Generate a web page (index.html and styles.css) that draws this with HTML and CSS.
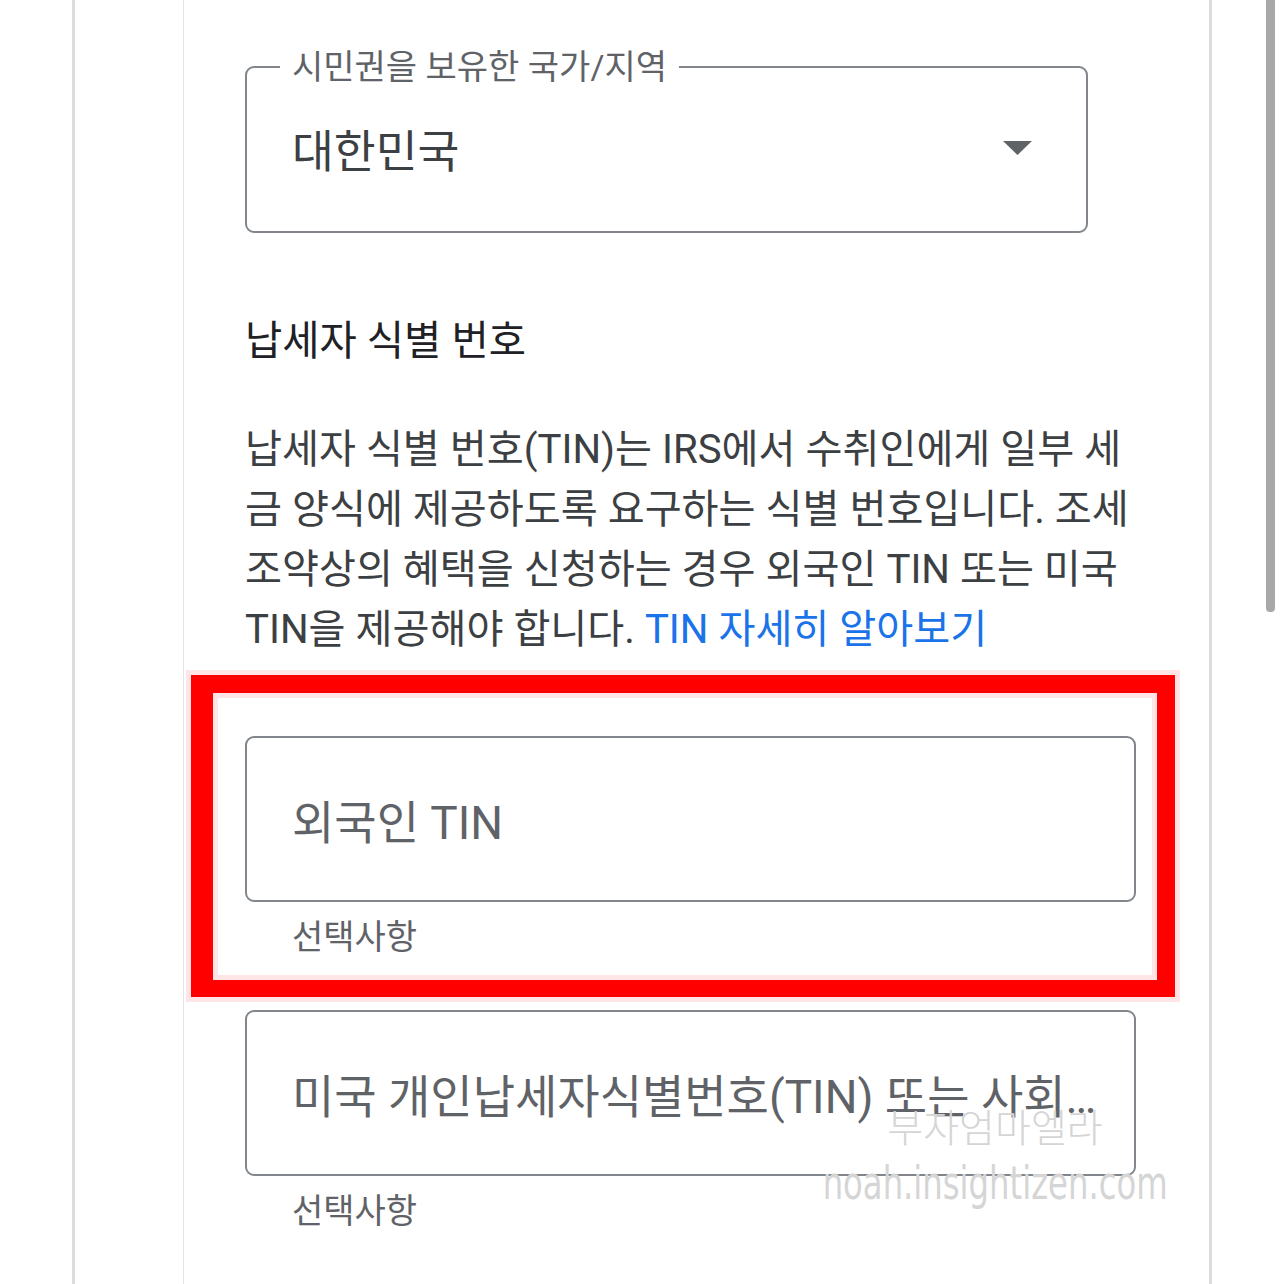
FILE: index.html
```html
<!DOCTYPE html>
<html lang="ko">
<head>
  <meta charset="UTF-8" />
  <meta name="viewport" content="width=device-width, initial-scale=1.0" />
  <title>납세자 정보</title>
  <link rel="stylesheet" href="styles.css">
</head>
<body>
  <div id="page">
    <div class="gutter"></div>

    <div id="sheet">
      <div class="rail"></div>

      <div id="panel">
        <!-- 국가 선택 -->
        <fieldset class="select-field">
          <legend>시민권을 보유한 국가/지역</legend>
          <div class="select-row">
            <span class="select-value">대한민국</span>
            <svg class="select-arrow" width="29" height="14" viewBox="0 0 29 14">
              <polygon points="0,0 29,0 14.5,14" fill="#5f6368" />
            </svg>
          </div>
        </fieldset>

        <h2 class="section-title">납세자 식별 번호</h2>

        <p class="section-desc">납세자 식별 번호(TIN)는 IRS에서 수취인에게 일부 세금 양식에 제공하도록 요구하는 식별 번호입니다. 조세 조약상의 혜택을 신청하는 경우 외국인 TIN 또는 미국 TIN을 제공해야 합니다. <a href="#" class="link">TIN 자세히 알아보기</a></p>

        <!-- 외국인 TIN -->
        <div class="text-field first">
          <div class="input-box">
            <span class="placeholder">외국인 TIN</span>
          </div>
          <div class="helper">선택사항</div>
        </div>

        <!-- 미국 TIN -->
        <div class="text-field">
          <div class="input-box">
            <span class="placeholder">미국 개인납세자식별번호(TIN) 또는 사회보장번호(SSN)</span>
          </div>
          <div class="helper">선택사항</div>
        </div>
      </div>
    </div>
  </div>

  <!-- 강조 표시 -->
  <div class="highlight"></div>

  <!-- 워터마크 -->
  <div class="watermark">
    <div class="wm-name">부자엄마엘라</div>
    <div class="wm-url"><span>noah.insightizen.com</span></div>
  </div>

  <div class="scrollbar"></div>
</body>
</html>
```

FILE: styles.css
```css
body {
  margin: 0;
  background: #fff;
  font-family: Roboto, "Noto Sans CJK KR", sans-serif;
  color: #3c4043;
}
#page {
  display: flex;
  height: 1284px;
  overflow: hidden;
}
.gutter {
  width: 72px;
  flex: none;
}
#sheet {
  display: flex;
  width: 1134px;
  flex: none;
  border-left: 3px solid #dadce0;
  border-right: 3px solid #dadce0;
}
.rail {
  width: 108px;
  flex: none;
}
#panel {
  flex: 1;
  min-width: 0;
  border-left: 1px solid #e3e3e3;
  padding: 47px 73px 0 61px;
}

/* ==== 선택 필드 ==== */
.select-field {
  width: 843px;
  box-sizing: border-box;
  margin: 0;
  padding: 0;
  border: 2px solid #80868b;
  border-radius: 9px;
}
.select-field legend {
  margin-left: 33px;
  padding: 0 12px;
  font-size: 34px;
  line-height: 40px;
  color: #5f6368;
}
.select-row {
  display: flex;
  align-items: center;
  justify-content: space-between;
  height: 144px;
  box-sizing: border-box;
  padding: 0 54px 22px 45px;
}
.select-value {
  font-size: 45.5px;
  color: #3c4043;
}

/* ==== 설명 ==== */
.section-title {
  margin: 84px 0 0;
  font-size: 40.5px;
  line-height: 48px;
  font-weight: normal;
  color: #202124;
}
.section-desc {
  margin: 55px 0 0;
  font-size: 40.2px;
  line-height: 60px;
  color: #3c4043;
}
.link {
  color: #1a73e8;
  text-decoration: none;
}

/* ==== 텍스트 필드 ==== */
.text-field {
  margin-top: 53px;
}
.text-field.first {
  margin-top: 76px;
}
.input-box {
  display: flex;
  align-items: center;
  height: 166px;
  box-sizing: border-box;
  padding: 0 28px 0 45px;
  border: 2px solid #80868b;
  border-radius: 9px;
}
.placeholder {
  min-width: 0;
  font-size: 46px;
  color: #5f6368;
  white-space: nowrap;
  overflow: hidden;
  text-overflow: ellipsis;
}
.helper {
  margin-top: 15px;
  padding-left: 47px;
  font-size: 34px;
  line-height: 40px;
  color: #5f6368;
}

/* ==== 오버레이 ==== */
.highlight {
  position: absolute;
  left: 191px;
  top: 675px;
  width: 984px;
  height: 322px;
  box-sizing: border-box;
  border-style: solid;
  border-color: #ff0000;
  border-width: 18px 18px 17px 22px;
  box-shadow: 0 0 0 5px rgba(255,0,0,0.1), inset 0 0 0 5px rgba(255,0,0,0.1);
}
.watermark {
  position: absolute;
  left: 735px;
  top: 1096px;
  width: 520px;
  text-align: center;
  color: #d5d5d5;
}
.wm-name {
  font-family: "Noto Sans CJK KR", sans-serif;
  font-weight: 300;
  font-size: 39px;
  line-height: 58px;
}
.wm-url {
  font-family: "DejaVu Sans Condensed", "DejaVu Sans", sans-serif;
  font-size: 46px;
  line-height: 58px;
  white-space: nowrap;
}
.wm-url span {
  display: inline-block;
  transform: scaleX(0.78);
}
.scrollbar {
  position: absolute;
  left: 1266px;
  top: 0;
  width: 9px;
  height: 612px;
  background: #a8a8a8;
  border-radius: 0 0 4px 4px;
}
```
